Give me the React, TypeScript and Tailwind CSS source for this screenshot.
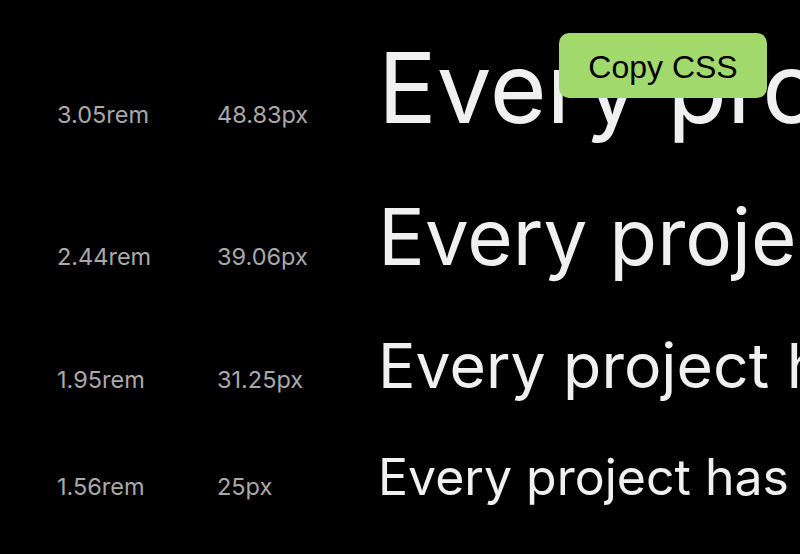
import React from 'react';

const rows = [
    { rem: '3.05rem', px: '48.83px', size: 'text-[97.66px]' },
    { rem: '2.44rem', px: '39.06px', size: 'text-[78.12px]' },
    { rem: '1.95rem', px: '31.25px', size: 'text-[62.5px]' },
    { rem: '1.56rem', px: '25px', size: 'text-[50px]' },
];

const App: React.FC = () => {
    return (
        <div className="relative h-[554px] w-[800px] overflow-hidden bg-black font-['Inter',sans-serif]">
            {/* Type scale rows */}
            <div className="flex flex-col gap-[44px] pl-[57px] pt-[29px]">
                {rows.map((row) => (
                    <div key={row.rem} className="flex items-baseline whitespace-nowrap">
                        <span className="w-[160px] shrink-0 text-[23.5px] text-[#a9a9a9]">{row.rem}</span>
                        <span className="w-[161px] shrink-0 text-[23.5px] text-[#a9a9a9]">{row.px}</span>
                        <span className={`${row.size} leading-[1.2] text-[#f0f0f0]`}>
                            Every project has a beginning
                        </span>
                    </div>
                ))}
            </div>

            {/* Copy button */}
            <button className="absolute left-[559px] top-[33px] flex h-[65px] w-[208px] items-center justify-center rounded-[10px] bg-[#a2d96d] pt-[3px] font-['Liberation_Sans',Arial,sans-serif] text-[32px] text-black">
                Copy CSS
            </button>
        </div>
    );
};

export default App;
